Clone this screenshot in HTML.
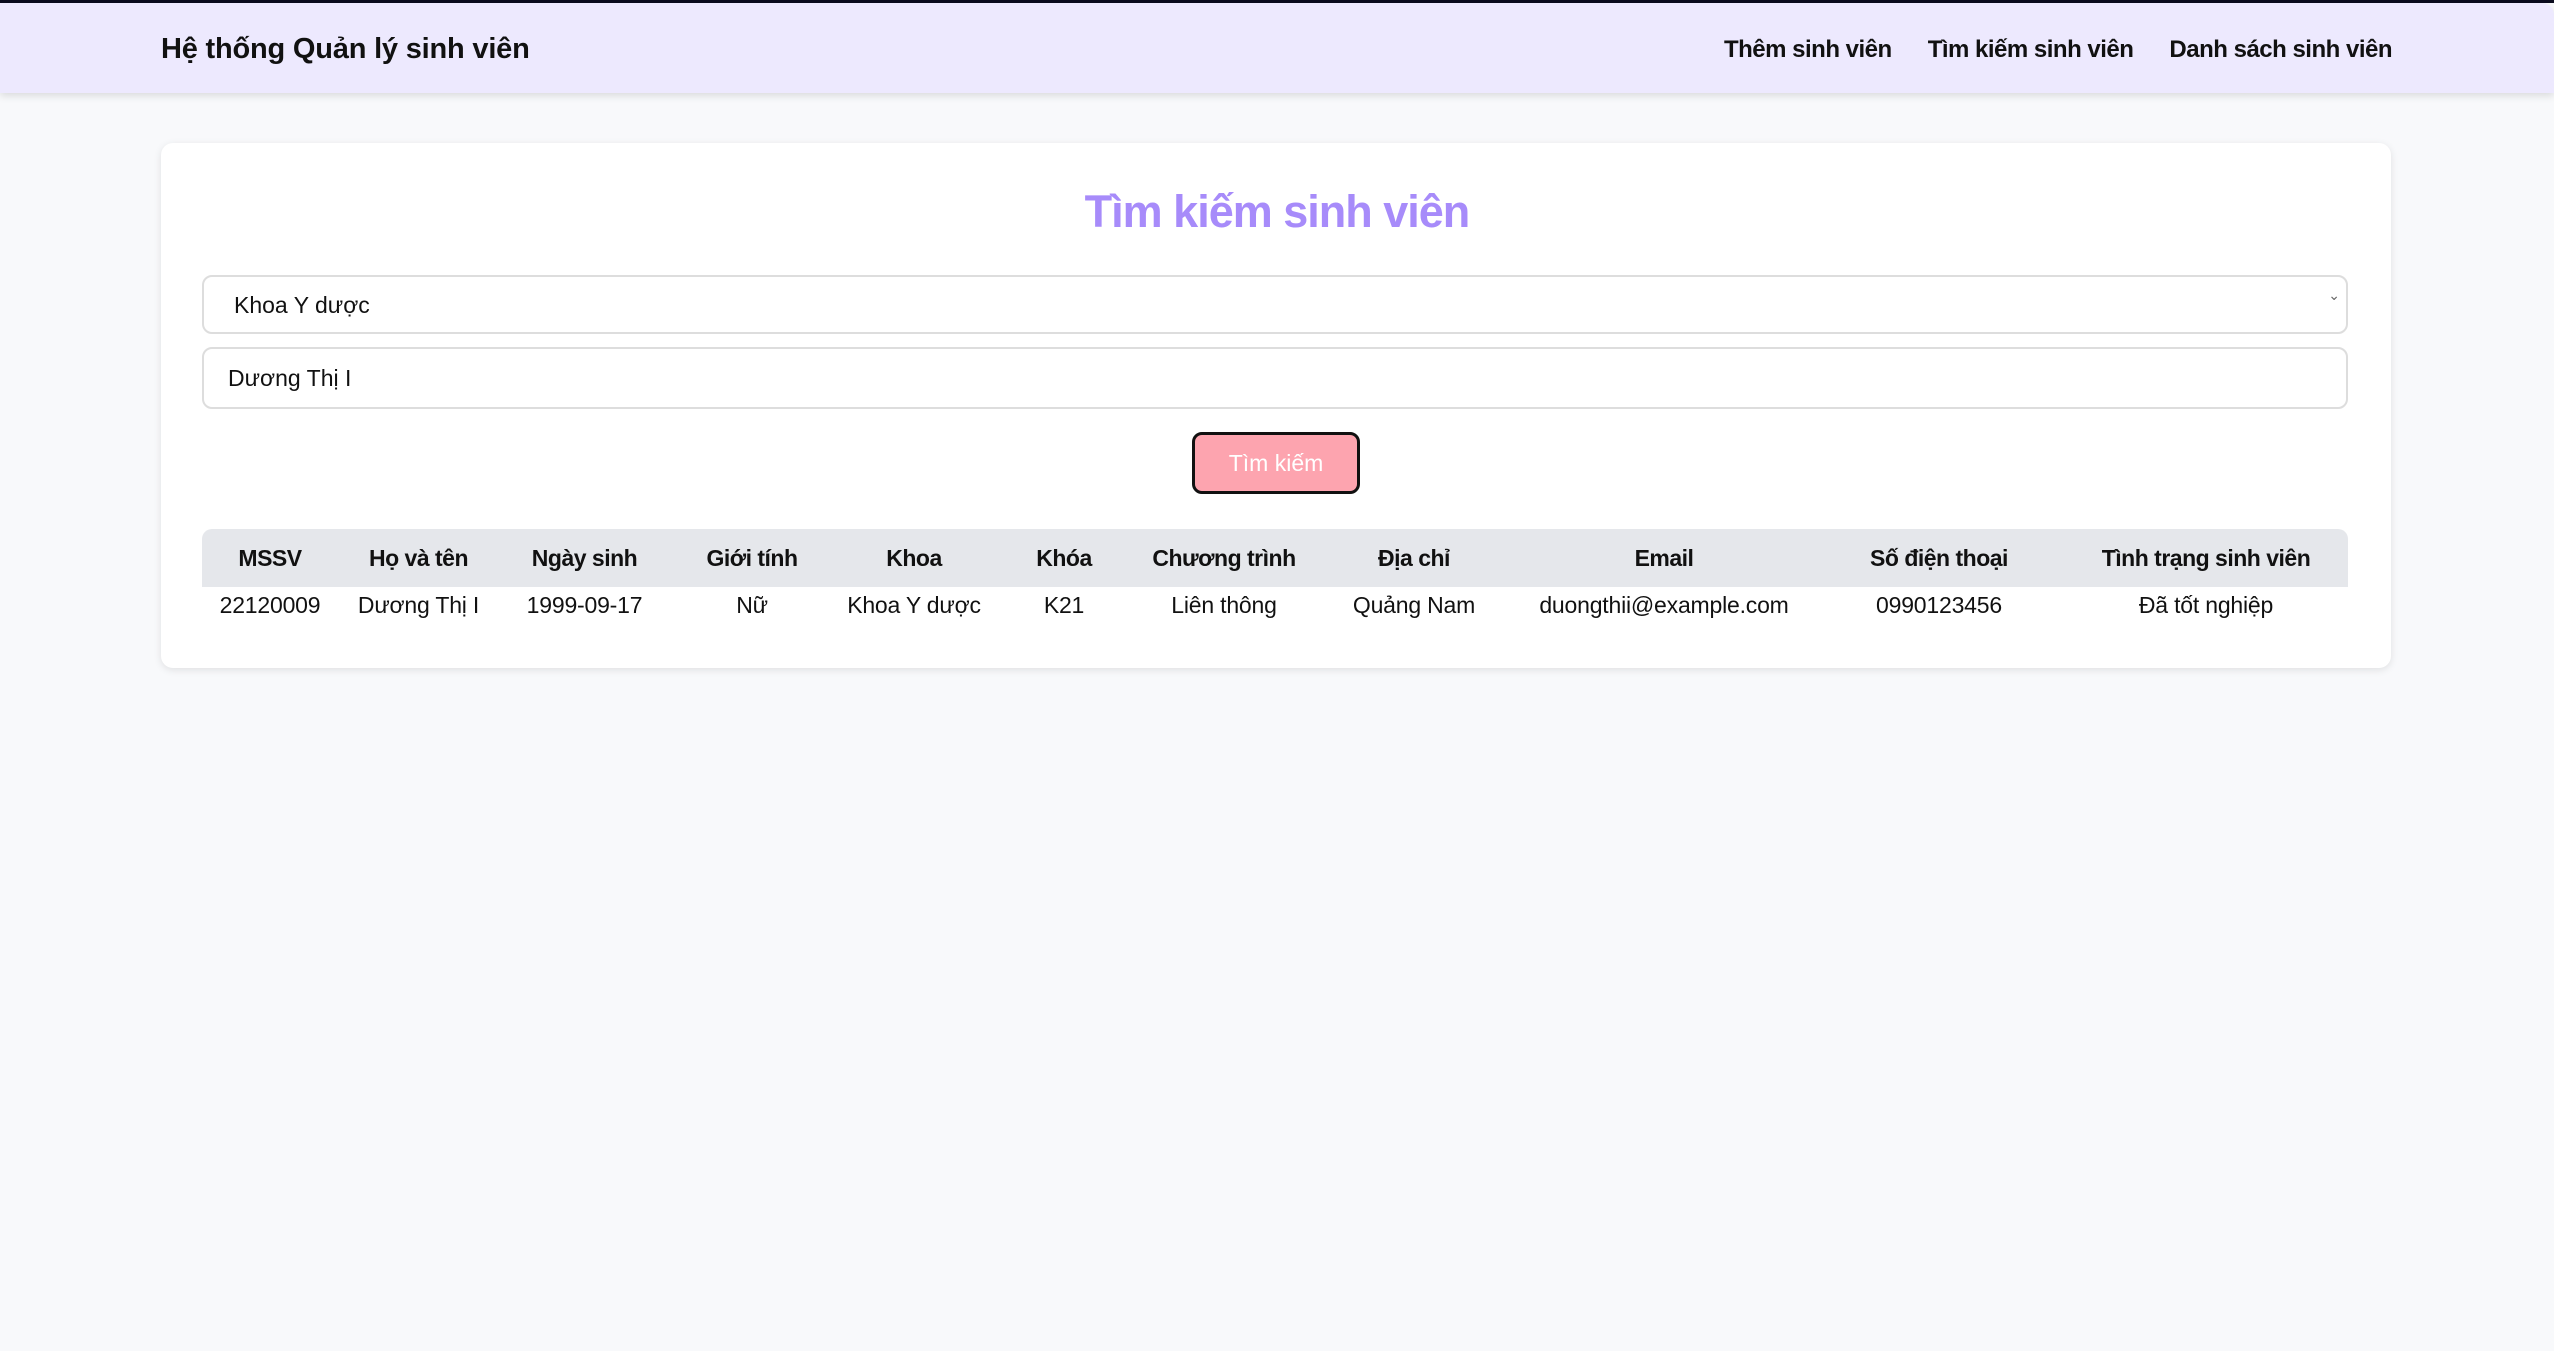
<!DOCTYPE html>
<html><head><meta charset="utf-8"><style>
*{box-sizing:border-box;margin:0;padding:0}
body{width:2554px;height:1351px;background:#f8f9fb;font-family:"Liberation Sans",sans-serif;color:#111;position:relative;overflow:hidden;border-top:3px solid #0b0b1e}
.nav{position:absolute;top:0;left:0;width:2554px;height:90px;background:#ede9fe;box-shadow:0 3px 8px rgba(0,0,0,.12);border-radius:0 12px 0 0}
.brand{position:absolute;left:161px;top:30px;font-size:29px;font-weight:bold;letter-spacing:-0.2px}
.links{position:absolute;right:162px;top:33px;font-size:24px;font-weight:bold;letter-spacing:-0.5px}
.links span{margin-left:36px}
.card{position:absolute;left:161px;top:140px;width:2230px;height:525px;background:#fff;border-radius:12px;box-shadow:0 2px 8px rgba(0,0,0,.1)}
h1{position:absolute;top:183px;left:0;width:2554px;text-align:center;color:#a78bfa;font-size:45px;font-weight:bold;letter-spacing:-1px}
.box{position:absolute;left:202px;width:2146px;border:2px solid #ddd;border-radius:10px;background:#fff;font-size:23px}
.sel{top:272px;height:59px;padding:15px 30px}
.sel:after{content:"⌄";position:absolute;right:6px;top:10px;font-size:14px;color:#666}
.inp{top:344px;height:62px;padding:16px 24px}
.btn{position:absolute;left:1192px;top:429px;width:168px;height:62px;background:#fda4af;border:3px solid #111;border-radius:10px;color:#fff;font-size:23px;text-align:center;line-height:56px}
table{position:absolute;left:202px;top:526px;width:2146px;border-collapse:collapse;table-layout:fixed;font-size:23px;text-align:center}
th{background:#e5e7eb;height:58px;font-weight:bold;letter-spacing:-0.5px;padding-top:2px;vertical-align:top;line-height:54px}
th:first-child{border-radius:10px 0 0 0}th:last-child{border-radius:0 10px 0 0}
td{height:39px;vertical-align:top;padding-top:5px;letter-spacing:-0.2px}
</style></head><body>
<div class="nav"><div class="brand">Hệ thống Quản lý sinh viên</div>
<div class="links"><span>Thêm sinh viên</span><span>Tìm kiếm sinh viên</span><span>Danh sách sinh viên</span></div></div>
<div class="card"></div>
<h1>Tìm kiếm sinh viên</h1>
<div class="box sel">Khoa Y dược</div>
<div class="box inp">Dương Thị I</div>
<div class="btn">Tìm kiếm</div>
<table><colgroup><col style="width:136px"><col style="width:161px"><col style="width:171px"><col style="width:164px"><col style="width:160px"><col style="width:140px"><col style="width:180px"><col style="width:200px"><col style="width:300px"><col style="width:250px"><col style="width:284px"></colgroup>
<tr><th>MSSV</th><th>Họ và tên</th><th>Ngày sinh</th><th>Giới tính</th><th>Khoa</th><th>Khóa</th><th>Chương trình</th><th>Địa chỉ</th><th>Email</th><th>Số điện thoại</th><th>Tình trạng sinh viên</th></tr>
<tr><td>22120009</td><td>Dương Thị I</td><td>1999-09-17</td><td>Nữ</td><td>Khoa Y dược</td><td>K21</td><td>Liên thông</td><td>Quảng Nam</td><td>duongthii@example.com</td><td>0990123456</td><td>Đã tốt nghiệp</td></tr>
</table>
</body></html>
